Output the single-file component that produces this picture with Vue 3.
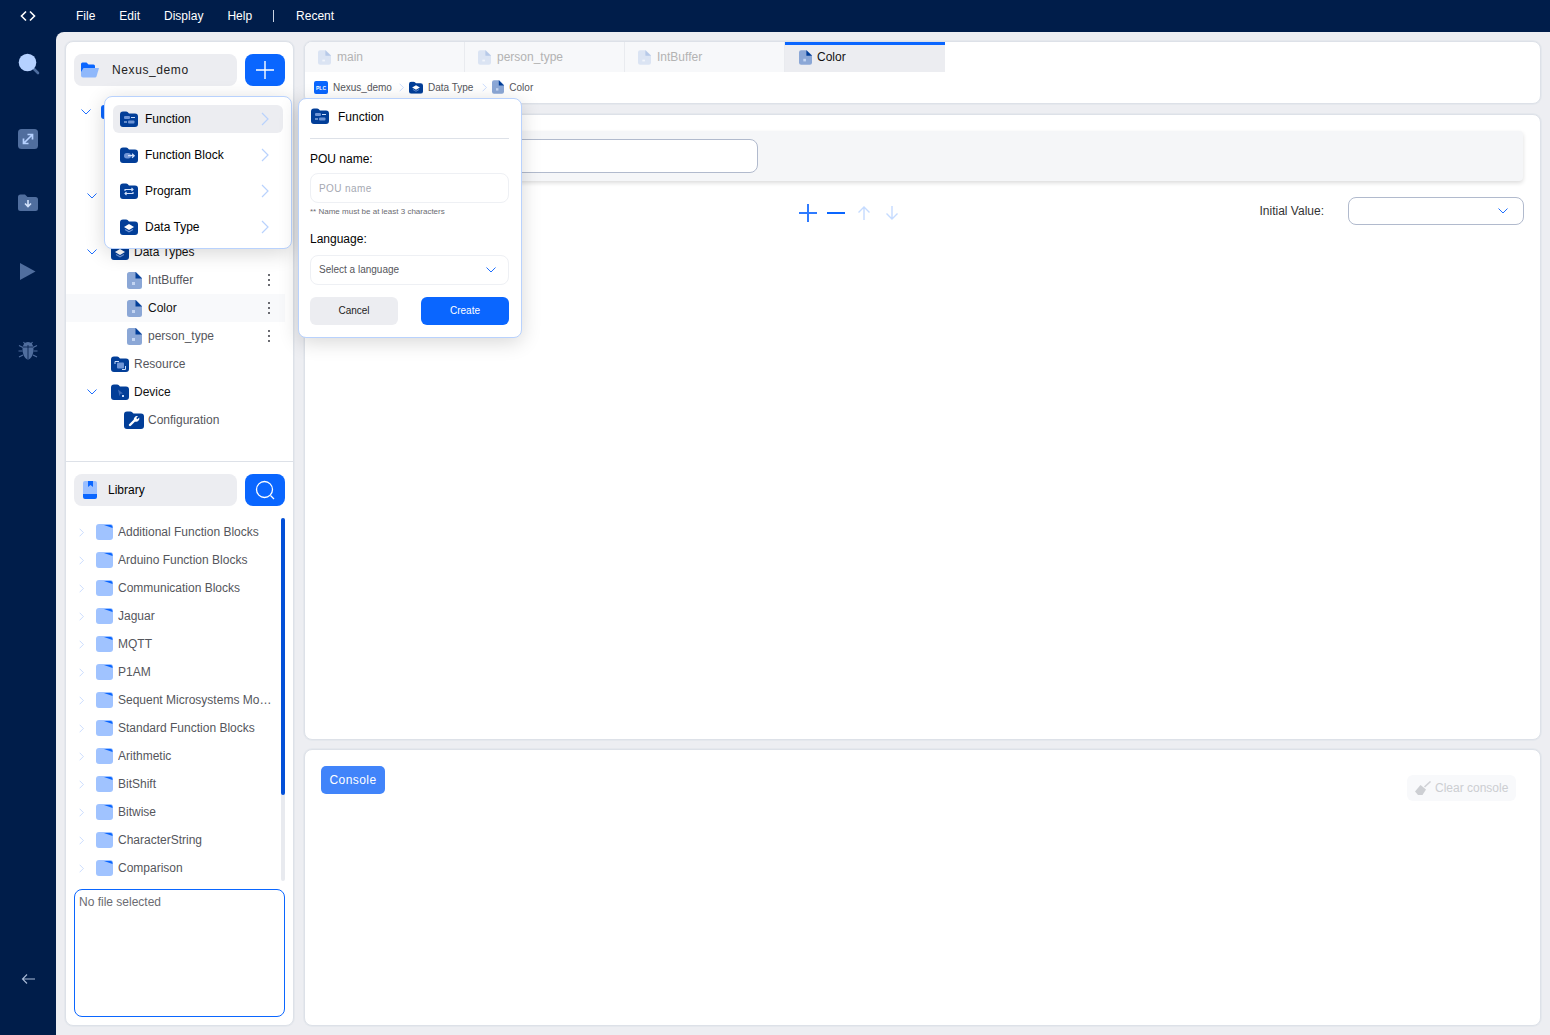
<template>
  <div class="app">
    <!-- shared icons -->
    <svg class="defs" width="0" height="0">
      <symbol id="folder" viewBox="0 0 18 16">
        <path fill="#023e98" d="M0 3.500a3 3 0 0 1 3-3h3.200a2 2 0 0 1 1.400.6l1.400 1.400h6a3 3 0 0 1 3 3v7.500a3 3 0 0 1-3 3H3a3 3 0 0 1-3-3z" />
      </symbol>
      <symbol id="file" viewBox="0 0 15 17">
        <path fill="#8ba7d6" d="M2.500 0H9l6 6v8.500a2.500 2.500 0 0 1-2.500 2.500h-10A2.500 2.500 0 0 1 0 14.500v-12A2.500 2.500 0 0 1 2.500 0z" />
        <path fill="#023e98" d="M8.500 0 15 6.500H8.500z" />
        <rect x="5" y="10" width="3" height="3" fill="#c4d5f2" />
      </symbol>
      <symbol id="tabfile" viewBox="0 0 15 17">
        <path fill="#dbe4f3" d="M2.500 0H9l6 6v8.500a2.500 2.500 0 0 1-2.500 2.500h-10A2.500 2.500 0 0 1 0 14.500v-12A2.500 2.500 0 0 1 2.500 0z" />
        <path fill="#b6c9e8" d="M8.500 0 15 6.500H8.500z" />
        <rect x="5" y="11" width="3" height="2" fill="#f2f5fb" />
      </symbol>
      <symbol id="libfolder" viewBox="0 0 17 16">
        <rect width="17" height="16" rx="3" fill="#a0c3ff" />
        <path d="M8 1h6.500a2 2 0 0 1 2 2v1z" fill="#0a66ff" />
      </symbol>
      <symbol id="fn" viewBox="0 0 18 16">
        <use href="#folder" />
        <rect x="4" y="5" width="6" height="3" rx="1" fill="#6f95d6" />
        <path d="M11 6.500h4M4 11h3" stroke="#c9dcfb" stroke-width="1.200" />
        <rect x="8" y="9.500" width="6.500" height="3" rx="1" fill="#6f95d6" />
      </symbol>
      <symbol id="fb" viewBox="0 0 18 16">
        <use href="#folder" />
        <rect x="4" y="6" width="7" height="5.500" rx="2.700" fill="#6f95d6" />
        <path d="M8 8.700h6M12 6.700l2.200 2-2.200 2" stroke="#d3e2fb" stroke-width="1.200" fill="none" />
      </symbol>
      <symbol id="prog" viewBox="0 0 18 16">
        <use href="#folder" />
        <path d="M5 8V6.500h8M11.500 5l1.500 1.500L11.500 8M13 9v1.500H5M6.500 9 5 10.500 6.500 12" stroke="#d3e2fb" stroke-width="1.100" fill="none" />
      </symbol>
      <symbol id="dtype" viewBox="0 0 18 16">
        <use href="#folder" />
        <path d="M9 5l5 3-5 3-5-3z" fill="#fff" />
        <path d="M5 10.500l4 2.300 4-2.300" stroke="#6f95d6" stroke-width="1.100" fill="none" />
      </symbol>
      <symbol id="res" viewBox="0 0 18 16">
        <use href="#folder" />
        <rect x="6" y="6.500" width="7" height="6" rx="1" fill="#6f95d6" />
        <path d="M4 8V5.500h4M14.500 10v3.500H11" stroke="#c9dcfb" stroke-width="1" fill="none" />
      </symbol>
      <symbol id="dev" viewBox="0 0 18 16">
        <use href="#folder" />
        <path d="M7 5.500l5 4-2.500.3-1 2.500z" fill="#3f6cb8" />
        <rect x="11" y="11" width="2" height="2" fill="#c9dcfb" />
      </symbol>
      <symbol id="conf" viewBox="0 0 20 18">
        <path fill="#023e98" d="M0 3.500a3 3 0 0 1 3-3h3.500a2 2 0 0 1 1.400.6L9.500 2.500H17a3 3 0 0 1 3 3V15a3 3 0 0 1-3 3H3a3 3 0 0 1-3-3z" />
        <path d="M6 14l5-5" stroke="#fff" stroke-width="2.400" stroke-linecap="round" />
        <path d="M10 9.500a3.200 3.200 0 0 1 4-4.200l-1.800 1.800 1.200 1.200 1.800-1.800a3.200 3.200 0 0 1-4.200 4z" fill="#fff" />
      </symbol>
      <symbol id="chev-d" viewBox="0 0 12 8">
        <path d="M1.500 1.500 6 6l4.500-4.500" fill="none" stroke="#1e6fff" stroke-width="1" />
      </symbol>
      <symbol id="chev-r" viewBox="0 0 8 14">
        <path d="M1 1l6 6-6 6" fill="none" stroke="#b9d2fd" stroke-width="1.200" />
      </symbol>
    </svg>

    <header class="topbar">
      <div class="logo">
        <svg width="16" height="12" viewBox="0 0 16 12">
          <path d="M6 1.500 1.500 6 6 10.500M10 1.500 14.500 6 10 10.500" fill="none" stroke="#fff" stroke-width="1.600" />
        </svg>
      </div>
      <nav class="menubar">
        <span>File</span>
        <span>Edit</span>
        <span>Display</span>
        <span>Help</span>
        <i class="sep"></i>
        <span>Recent</span>
      </nav>
    </header>

    <div class="body">
      <aside class="rail">
        <svg class="r-search" width="22" height="22" viewBox="0 0 22 22">
          <path d="M15 15l5 5" stroke="#4d6d9f" stroke-width="2.600" stroke-linecap="round" />
          <circle cx="9.500" cy="9.500" r="8.800" fill="#b5d1ff" />
        </svg>
        <svg class="r-expand" width="20" height="20" viewBox="0 0 20 20">
          <rect width="20" height="20" rx="3.500" fill="#506e9e" />
          <path d="M6 14l8-8M9.500 5.500H14.500V10.500M5.500 9.500V14.500H10.500" fill="none" stroke="#b5d1ff" stroke-width="1.700" />
        </svg>
        <svg class="r-open" width="20" height="18" viewBox="0 0 20 18">
          <path fill="#506e9e" d="M0 3a2.500 2.500 0 0 1 2.500-2.500h4.500l2.500 2.500h8a2.500 2.500 0 0 1 2.500 2.500v9a2.500 2.500 0 0 1-2.500 2.500h-15a2.500 2.500 0 0 1-2.500-2.500z" />
          <path d="M10 6v6M7 9.500l3 3 3-3" fill="none" stroke="#d3e2fb" stroke-width="1.600" />
        </svg>
        <svg class="r-play" width="16" height="17" viewBox="0 0 16 17">
          <path d="M0 0l15.500 8.500L0 17z" fill="#506e9e" />
        </svg>
        <svg class="r-bug" width="20" height="21" viewBox="0 0 20 21">
          <path d="M5.500 3 7 5M14.500 3 13 5M1 6.500l4 2M19 6.500l-4 2M0.500 12H4.500M19.500 12H15.500M1 18l4-2M19 18l-4-2" stroke="#506e9e" stroke-width="1.200" />
          <path d="M10 3c3.500 0 5.500 3 5.500 7.500S13 20.500 10 20.500 4.500 15 4.500 10.500 6.500 3 10 3z" fill="#506e9e" />
          <path d="M10 6v14M5 8h10" stroke="#001d4a" stroke-width="0.800" />
        </svg>
        <svg class="r-back" width="14" height="12" viewBox="0 0 14 12">
          <path d="M14 6H1.500M6 1.500 1.500 6 6 10.500" fill="none" stroke="#a9bbd6" stroke-width="1.100" />
        </svg>
      </aside>

      <main class="workspace">
        <section class="panel left">
          <div class="project">
            <div class="head">
              <div class="pill">
                <svg class="pill-ico" width="18" height="16" viewBox="0 0 18 16">
                  <path fill="#0a66ff" d="M0 2a1.500 1.500 0 0 1 1.500-1.500h4l2 2h5a1.500 1.500 0 0 1 1.500 1.500v3H0z" />
                  <path fill="#0a66ff" d="M0 3h2v9H0z" />
                  <path fill="#8fb8fb" d="M2.500 6H18l-2.500 8.500a1.500 1.500 0 0 1-1.400 1H2a2 2 0 0 1-2-2V10z" />
                </svg>
                <span class="pill-name">Nexus_demo</span>
              </div>
              <button class="square">
                <svg width="18" height="18" viewBox="0 0 18 18">
                  <path d="M9 0v18M0 9h18" stroke="#fff" stroke-width="1.400" />
                </svg>
              </button>
            </div>

            <div class="tree">
              <div class="row root">
                <svg class="chev" width="12" height="8"><use href="#chev-d" /></svg>
                <span class="plc-stub"></span>
              </div>
              <div class="row"></div>
              <div class="row"></div>
              <div class="row sub">
                <svg class="chev" width="12" height="8"><use href="#chev-d" /></svg>
              </div>
              <div class="row"></div>
              <div class="row sub">
                <svg class="chev" width="12" height="8"><use href="#chev-d" /></svg>
                <svg class="ico" width="18" height="16"><use href="#dtype" /></svg>
                <span class="strong">Data Types</span>
              </div>
              <div
                v-for="leaf in leaves"
                :key="leaf"
                class="row leaf"
                :class="{ selected: leaf === 'Color' }"
              >
                <svg class="leaf-ico" width="15" height="17"><use href="#file" /></svg>
                <span class="grow">{{ leaf }}</span>
                <span class="kebab"><i></i><i></i><i></i></span>
              </div>
              <div class="row sub">
                <span class="chev-slot"></span>
                <svg class="ico" width="18" height="16"><use href="#res" /></svg>
                <span>Resource</span>
              </div>
              <div class="row sub">
                <svg class="chev" width="12" height="8"><use href="#chev-d" /></svg>
                <svg class="ico" width="18" height="16"><use href="#dev" /></svg>
                <span class="strong">Device</span>
              </div>
              <div class="row conf">
                <svg class="conf-ico" width="20" height="18"><use href="#conf" /></svg>
                <span>Configuration</span>
              </div>
            </div>
          </div>

          <div class="library">
            <div class="head">
              <div class="pill">
                <svg class="book" width="14" height="18" viewBox="0 0 14 18">
                  <path fill="#9cc0ff" d="M2 0h10a2 2 0 0 1 2 2v12H0V2a2 2 0 0 1 2-2z" />
                  <path fill="#0a66ff" d="M0 13h14v3a2 2 0 0 1-2 2H2a2 2 0 0 1-2-2zM5 0h5v6L7.500 4 5 6z" />
                </svg>
                <span class="lib-name">Library</span>
              </div>
              <button class="square">
                <svg width="20" height="20" viewBox="0 0 20 20">
                  <circle cx="9.500" cy="9.500" r="8" fill="none" stroke="#fff" stroke-width="1.300" />
                  <path d="M15.500 15.500l3.500 3.500" stroke="#fff" stroke-width="1.300" />
                </svg>
              </button>
            </div>
            <div class="lib-body">
              <ul class="lib-list">
                <li v-for="item in libs" :key="item">
                  <svg class="lib-chev" width="5" height="9" viewBox="0 0 8 14"><use href="#chev-r" /></svg>
                  <svg class="lib-ico" width="17" height="16"><use href="#libfolder" /></svg>
                  <span class="lib-text">{{ item }}</span>
                </li>
              </ul>
              <div class="track"><div class="thumb"></div></div>
            </div>
            <div class="filebox">No file selected</div>
          </div>
        </section>

        <div class="right">
          <section class="panel tabs-panel">
            <div class="tabs">
              <div v-for="tab in tabs" :key="tab" class="tab">
                <svg width="13" height="15"><use href="#tabfile" /></svg>
                <span>{{ tab }}</span>
              </div>
              <div class="tab active">
                <svg width="13" height="15"><use href="#file" /></svg>
                <span>Color</span>
              </div>
            </div>
            <div class="crumbs">
              <svg width="14" height="13" viewBox="0 0 14 13">
                <rect width="14" height="13" rx="2" fill="#0a66ff" />
                <text x="7" y="8.500" text-anchor="middle" font-size="5" font-weight="700" fill="#fff" font-family="Liberation Sans, sans-serif">PLC</text>
              </svg>
              <span>Nexus_demo</span>
              <svg class="c-sep" width="5" height="9" viewBox="0 0 8 14"><use href="#chev-r" /></svg>
              <svg width="14" height="13"><use href="#dtype" /></svg>
              <span>Data Type</span>
              <svg class="c-sep last" width="5" height="9" viewBox="0 0 8 14"><use href="#chev-r" /></svg>
              <svg width="12" height="14"><use href="#file" /></svg>
              <span>Color</span>
            </div>
          </section>

          <section class="panel editor">
            <div class="namebar">
              <div class="nameinput"></div>
            </div>
            <div class="tools">
              <div class="tool-icons">
                <svg width="18" height="18" viewBox="0 0 18 18"><path d="M9 0v18M0 9h18" stroke="#2f7bff" stroke-width="2" /></svg>
                <svg width="18" height="18" viewBox="0 0 18 18"><path d="M0 9h18" stroke="#0a66ff" stroke-width="2" /></svg>
                <svg width="18" height="18" viewBox="0 0 18 18"><path d="M9 16V3M3.500 8.500 9 3l5.500 5.500" fill="none" stroke="#c5dbff" stroke-width="1.400" /></svg>
                <svg width="18" height="18" viewBox="0 0 18 18"><path d="M9 2v13M3.500 9.500 9 15l5.500-5.500" fill="none" stroke="#c5dbff" stroke-width="1.400" /></svg>
              </div>
              <div class="initial">
                <label>Initial Value:</label>
                <div class="initial-select">
                  <svg width="12" height="8"><use href="#chev-d" /></svg>
                </div>
              </div>
            </div>
          </section>

          <section class="panel console">
            <button class="console-btn">Console</button>
            <button class="clear-btn">
              <svg width="17" height="14" viewBox="0 0 17 14">
                <path d="M9.500 6 15.500 0.500" stroke="#d0d2d6" stroke-width="1.600" />
                <path d="M5.500 4 11 8.500 7.500 14H3L0 10.500z" fill="#cdcfd3" />
              </svg>
              <span>Clear console</span>
            </button>
          </section>
        </div>
      </main>
    </div>

    <!-- new POU popover, sits over the tree and editor -->
    <div class="pou-menu">
      <div
        v-for="(m, i) in pouTypes"
        :key="m.label"
        class="pou-item"
        :class="{ on: i === 0 }"
      >
        <svg width="18" height="16"><use :href="m.icon" /></svg>
        <span>{{ m.label }}</span>
        <svg class="pou-chev" width="8" height="14"><use href="#chev-r" /></svg>
      </div>
    </div>

    <form class="pou-form" @submit.prevent>
      <div class="form-title">
        <svg width="18" height="16"><use href="#fn" /></svg>
        <span>Function</span>
      </div>
      <label class="flabel first">POU name:</label>
      <input v-model="pouName" class="finput" type="text" placeholder="POU name" />
      <p class="hint">** Name must be at least 3 characters</p>
      <label class="flabel second">Language:</label>
      <div class="fselect">
        <span>Select a language</span>
        <svg width="12" height="8"><use href="#chev-d" /></svg>
      </div>
      <div class="factions">
        <button type="button" class="cancel">Cancel</button>
        <button type="submit" class="create">Create</button>
      </div>
    </form>
  </div>
</template>

<script setup>
import { ref } from 'vue'

const pouName = ref('')

const leaves = ['IntBuffer', 'Color', 'person_type']
const tabs = ['main', 'person_type', 'IntBuffer']

const pouTypes = [
  { label: 'Function', icon: '#fn' },
  { label: 'Function Block', icon: '#fb' },
  { label: 'Program', icon: '#prog' },
  { label: 'Data Type', icon: '#dtype' },
]

const libs = [
  'Additional Function Blocks',
  'Arduino Function Blocks',
  'Communication Blocks',
  'Jaguar',
  'MQTT',
  'P1AM',
  'Sequent Microsystems Modules',
  'Standard Function Blocks',
  'Arithmetic',
  'BitShift',
  'Bitwise',
  'CharacterString',
  'Comparison',
]
</script>

<style>
html,
body {
  margin: 0;
  background: #001d4a;
}
</style>

<style scoped>
.app {
  position: relative;
  width: 1550px;
  height: 1035px;
  display: flex;
  flex-direction: column;
  overflow: hidden;
  background: #001d4a;
  font-family: 'Liberation Sans', Arial, sans-serif;
  font-size: 12px;
  color: #030303;
}

.defs {
  position: absolute;
}

.topbar {
  height: 32px;
  display: flex;
  align-items: center;
  color: #fff;
}

.logo {
  width: 56px;
  display: flex;
  justify-content: center;
}

.menubar {
  display: flex;
  align-items: center;
  gap: 24px;
  padding-left: 20px;
}

.sep {
  width: 1px;
  height: 12px;
  margin: 0 -2px 0 -3px;
  background: #c9d3e2;
}

.body {
  flex: 1;
  display: flex;
  min-height: 0;
}

.rail {
  width: 56px;
  display: flex;
  flex-direction: column;
  align-items: center;
}

.r-search {
  margin: 21px 0 0 2px;
}

.r-expand {
  margin-top: 54px;
}

.r-open {
  margin-top: 45px;
}

.r-play {
  margin-top: 51px;
}

.r-bug {
  margin-top: 59px;
}

.r-back {
  margin-top: auto;
  margin-bottom: 50px;
}

.workspace {
  flex: 1;
  display: flex;
  gap: 10px;
  padding: 9px;
  background: #edeef2;
  border-top-left-radius: 8px;
  min-width: 0;
}

.panel {
  box-sizing: border-box;
  background: #fff;
  border: 1px solid #dde1e8;
  border-radius: 8px;
  box-shadow: 0 0 0 1px #e5e8ed;
}

.left {
  width: 229px;
  display: flex;
  flex-direction: column;
  overflow: hidden;
}

.project {
  height: 420px;
  box-sizing: border-box;
  border-bottom: 1px solid #dde1e8;
  flex-shrink: 0;
}

.head {
  display: flex;
  gap: 8px;
  padding: 0 8px;
}

.project .head {
  padding-top: 12px;
}

.library .head {
  padding-top: 12px;
}

.pill {
  flex: 1;
  height: 32px;
  display: flex;
  align-items: center;
  background: #ecedf1;
  border-radius: 8px;
}

.pill-ico {
  margin-left: 7px;
}

.pill-name {
  margin-left: 13px;
  letter-spacing: 0.6px;
  color: #222;
}

.book {
  margin-left: 9px;
}

.lib-name {
  margin-left: 11px;
}

.square {
  width: 40px;
  height: 32px;
  padding: 0;
  border: none;
  border-radius: 8px;
  background: #0a66ff;
  display: flex;
  align-items: center;
  justify-content: center;
}

.tree {
  margin-top: 12px;
  width: 219px;
}

.row {
  height: 28px;
  display: flex;
  align-items: center;
  color: #55565c;
}

.root {
  padding-left: 14px;
}

.root .chev {
  margin-right: 9px;
}

.plc-stub {
  width: 14px;
  height: 14px;
  border-radius: 3px;
  background: #0a66ff;
}

.sub {
  padding-left: 20px;
}

.chev,
.chev-slot {
  width: 12px;
  flex-shrink: 0;
}

.ico {
  margin-left: 13px;
  margin-right: 5px;
}

.strong {
  color: #111;
}

.leaf {
  padding-left: 61px;
}

.leaf-ico {
  margin-right: 6px;
}

.grow {
  flex: 1;
}

.selected {
  background: #f8f9fb;
  color: #111;
}

.kebab {
  width: 2px;
  margin-right: 15px;
  display: flex;
  flex-direction: column;
  gap: 3px;
}

.kebab i {
  width: 2px;
  height: 2px;
  background: #6b6c72;
}

.conf {
  padding-left: 58px;
}

.conf-ico {
  margin-right: 4px;
}

.library {
  flex: 1;
  display: flex;
  flex-direction: column;
  min-height: 0;
}

.lib-body {
  display: flex;
  height: 364px;
  margin-top: 12px;
  padding-right: 8px;
}

.lib-list {
  flex: 1;
  min-width: 0;
  list-style: none;
  margin: 0;
  padding: 0;
}

.lib-list li {
  height: 28px;
  display: flex;
  align-items: center;
  color: #55565c;
}

.lib-chev {
  margin-left: 13px;
  margin-right: 12px;
  flex-shrink: 0;
}

.lib-ico {
  flex-shrink: 0;
  margin-right: 5px;
}

.lib-text {
  width: 154px;
  white-space: nowrap;
  overflow: hidden;
  text-overflow: ellipsis;
}

.track {
  width: 4px;
  height: 363px;
  background: #e8eaef;
  border-radius: 2px;
}

.thumb {
  height: 277px;
  background: #0350d8;
  border-radius: 2px;
}

.filebox {
  box-sizing: border-box;
  height: 128px;
  margin: 7px 8px 0;
  padding: 5px 4px;
  border: 1px solid #0a66ff;
  border-radius: 8px;
  color: #6b6c72;
}

.right {
  flex: 1;
  min-width: 0;
  display: flex;
  flex-direction: column;
}

.tabs-panel {
  height: 63px;
  overflow: hidden;
}

.tabs {
  display: flex;
  height: 30px;
}

.tab {
  box-sizing: border-box;
  width: 160px;
  display: flex;
  align-items: center;
  gap: 6px;
  padding-left: 13px;
  background: #f7f8fa;
  border-right: 1px solid #e9ebef;
  color: #b3b3b3;
}

.tab.active {
  gap: 5px;
  padding-left: 14px;
  border-right: none;
  background: #ecedf1;
  box-shadow: inset 0 3px 0 #0a66ff;
  color: #111;
}

.crumbs {
  display: flex;
  align-items: center;
  gap: 5px;
  height: 30px;
  padding-left: 9px;
  font-size: 10px;
  color: #55565c;
}

.c-sep {
  margin-left: 2px;
}

.c-sep.last {
  margin-left: 4px;
}

.editor {
  height: 626px;
  margin-top: 10px;
  padding: 16px;
}

.namebar {
  box-sizing: border-box;
  height: 50px;
  margin-right: 1px;
  padding: 8px;
  background: #f5f6f8;
  border-radius: 4px;
  box-shadow: 0 2px 4px rgba(0, 0, 0, 0.14);
}

.nameinput {
  box-sizing: border-box;
  width: 429px;
  height: 34px;
  background: #fff;
  border: 1px solid #b1bacd;
  border-radius: 8px;
}

.tools {
  display: flex;
  align-items: center;
  margin-top: 16px;
}

.tool-icons {
  display: flex;
  gap: 10px;
  margin: 4px 0 0 478px;
}

.initial {
  margin-left: auto;
  display: flex;
  align-items: center;
  gap: 24px;
}

.initial label {
  color: #333;
}

.initial-select {
  box-sizing: border-box;
  width: 176px;
  height: 28px;
  padding-right: 14px;
  display: flex;
  align-items: center;
  justify-content: flex-end;
  background: #fff;
  border: 1px solid #b1bacd;
  border-radius: 8px;
}

.console {
  flex: 1;
  margin-top: 9px;
  padding: 16px;
  display: flex;
  justify-content: space-between;
  align-items: flex-start;
}

.console-btn {
  width: 64px;
  height: 28px;
  padding: 0;
  border: none;
  border-radius: 5px;
  background: #4184fa;
  color: #fff;
  font: 12px 'Liberation Sans', Arial, sans-serif;
  letter-spacing: 0.45px;
}

.clear-btn {
  width: 109px;
  height: 26px;
  margin: 9px 8px 0 0;
  padding: 0 0 0 8px;
  display: flex;
  align-items: center;
  gap: 3px;
  border: none;
  border-radius: 6px;
  background: #f8f9fb;
  color: #ccced2;
  font: 12px 'Liberation Sans', Arial, sans-serif;
}

.pou-menu {
  position: absolute;
  left: 104px;
  top: 96px;
  box-sizing: border-box;
  width: 188px;
  height: 153px;
  padding: 8px 8px 7px;
  display: flex;
  flex-direction: column;
  gap: 8px;
  background: #fff;
  border: 1px solid #b9d2fd;
  border-radius: 8px;
  box-shadow: 0 4px 20px rgba(0, 0, 0, 0.16);
}

.pou-item {
  height: 28px;
  flex-shrink: 0;
  display: flex;
  align-items: center;
  gap: 7px;
  padding: 0 14px 0 7px;
  border-radius: 6px;
}

.pou-item.on {
  background: #ecedf1;
}

.pou-chev {
  margin-left: auto;
}

.pou-form {
  position: absolute;
  left: 298px;
  top: 98px;
  box-sizing: border-box;
  width: 224px;
  height: 240px;
  padding: 0 12px 0 11px;
  background: #fff;
  border: 1px solid #b9d2fd;
  border-radius: 8px;
  box-shadow: 0 4px 20px rgba(0, 0, 0, 0.16);
}

.form-title {
  box-sizing: border-box;
  height: 40px;
  padding: 0 0 4px 1px;
  display: flex;
  align-items: center;
  gap: 9px;
  border-bottom: 1px solid #dde1e8;
}

.form-title svg {
  margin-bottom: 2px;
}

.flabel {
  display: block;
  line-height: 14px;
}

.first {
  margin-top: 13px;
}

.second {
  margin-top: 16px;
}

.finput {
  box-sizing: border-box;
  display: block;
  width: 199px;
  height: 30px;
  margin-top: 7px;
  padding: 0 8px;
  border: 1px solid #eef0f4;
  border-radius: 8px;
  outline: none;
  font: 10px 'Liberation Sans', Arial, sans-serif;
  letter-spacing: 0.4px;
}

.finput::placeholder {
  color: #a6a9b2;
}

.hint {
  margin: 4px 0 0;
  font-size: 8px;
  line-height: 9px;
  color: #6b6c72;
}

.fselect {
  box-sizing: border-box;
  width: 199px;
  height: 30px;
  margin-top: 9px;
  padding: 0 11px 0 8px;
  display: flex;
  align-items: center;
  justify-content: space-between;
  border: 1px solid #eef0f4;
  border-radius: 8px;
  font-size: 10px;
  color: #55565c;
}

.fselect span {
  margin-bottom: 2px;
}

.factions {
  display: flex;
  justify-content: space-between;
  margin-top: 12px;
  width: 199px;
}

.factions button {
  width: 88px;
  height: 28px;
  padding: 0 0 2px;
  border: none;
  border-radius: 6px;
  font: 10px 'Liberation Sans', Arial, sans-serif;
}

.cancel {
  background: #ecedf1;
  color: #222;
}

.create {
  background: #0a66ff;
  color: #fff;
}
</style>
